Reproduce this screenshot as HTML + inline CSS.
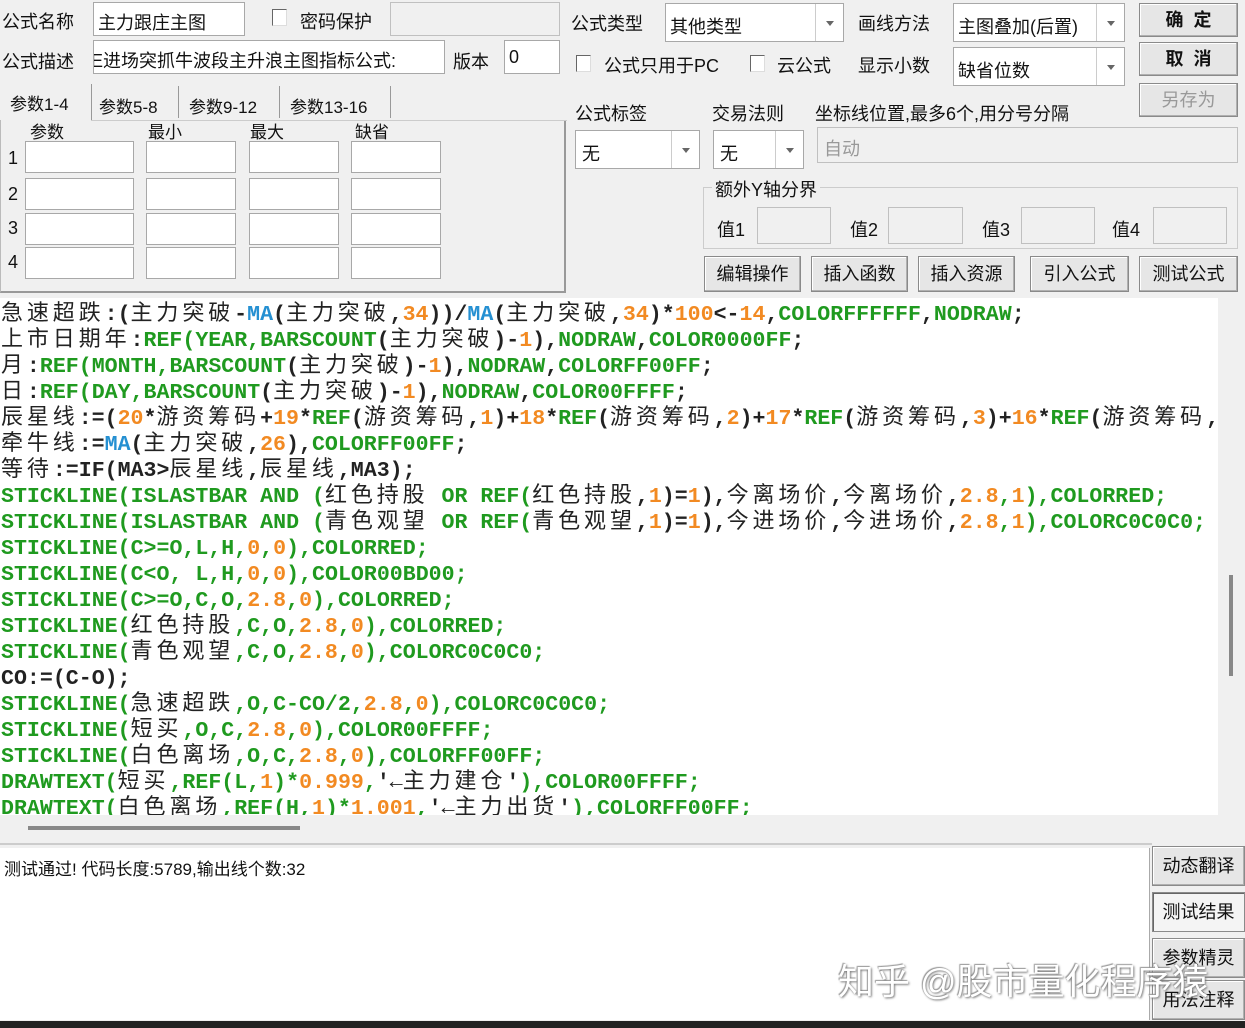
<!DOCTYPE html>
<html><head><meta charset="utf-8"><style>
*{margin:0;padding:0;box-sizing:border-box}
body{width:1245px;height:1028px;background:#f0f0f0;position:relative;overflow:hidden;font-family:"Liberation Sans","Noto Sans CJK SC",sans-serif;font-size:18px;color:#111}
.a{position:absolute;white-space:nowrap}
.in{position:absolute;background:#fff;border:1px solid #a8a8a8}
.dis{position:absolute;background:#f0f0f0;border:1px solid #c0c0c0}
.btn{position:absolute;background:#e6e6e6;border:1px solid #8a8a8a;box-shadow:inset -1px -1px 0 #b0b0b0,inset 1px 1px 0 #fff;text-align:center;font-size:18px}
.cb{position:absolute;width:15px;height:17px;background:#fff;border:1px solid #666;border-right-color:#ddd;border-bottom-color:#ddd}
.dd{position:absolute;top:0;right:0;bottom:0;width:28px;border-left:1px solid #ccc}
.dd:after{content:"";position:absolute;left:10px;top:47%;border:4px solid transparent;border-top:5px solid #666}
#code{position:absolute;left:0;top:298px;width:1218px;height:517px;background:#fff;overflow:hidden;font-family:"Liberation Mono","Noto Sans CJK SC",monospace;font-weight:bold;font-size:21.6px;color:#222}
#code div{height:26px;line-height:26px;white-space:nowrap;padding-left:1px}
#code div:before{content:"\3000";display:inline-block;width:0;font-family:"Noto Sans CJK SC",sans-serif;font-weight:normal;font-size:22px;line-height:26px}
#code i{font-style:normal;font-weight:normal;font-family:"Noto Sans CJK SC",sans-serif;letter-spacing:3.9px;font-size:22px;line-height:26px}
.g{color:#1f9a1f}.b{color:#2590d2}.o{color:#f28a22}
</style></head><body>
<div class="a" style="left:2px;top:8px">公式名称</div>
<div class="in" style="left:93px;top:2px;width:152px;height:34px"><span class="a" style="left:4px;top:6px">主力跟庄主图</span></div>
<div class="cb" style="left:272px;top:9px"></div>
<div class="a" style="left:300px;top:8px">密码保护</div>
<div class="dis" style="left:390px;top:2px;width:170px;height:34px"></div>
<div class="a" style="left:2px;top:48px">公式描述</div>
<div class="in" style="left:93px;top:40px;width:352px;height:34px;overflow:hidden"><span class="a" style="left:-3px;top:6px">E进场突抓牛波段主升浪主图指标公式:</span></div>
<div class="a" style="left:453px;top:48px">版本</div>
<div class="in" style="left:504px;top:40px;width:56px;height:34px"><span class="a" style="left:4px;top:6px">0</span></div>

<div class="a" style="left:10px;top:90px;font-size:17px">参数1-4</div>
<div class="a" style="left:91px;top:84px;width:1px;height:36px;background:#999"></div>
<div class="a" style="left:99px;top:93px;font-size:17px">参数5-8</div>
<div class="a" style="left:178px;top:86px;width:1px;height:32px;background:#999"></div>
<div class="a" style="left:189px;top:93px;font-size:17px">参数9-12</div>
<div class="a" style="left:279px;top:86px;width:1px;height:32px;background:#999"></div>
<div class="a" style="left:290px;top:93px;font-size:17px">参数13-16</div>
<div class="a" style="left:390px;top:86px;width:1px;height:32px;background:#999"></div>
<div class="a" style="left:0;top:120px;width:566px;height:173px;border:1px solid #bbb;border-right:2px solid #999;border-bottom:2px solid #999;border-top:none"></div>
<div class="a" style="left:91px;top:120px;width:476px;height:1px;background:#ccc"></div>
<div class="a" style="left:30px;top:118px;font-size:17px">参数</div>
<div class="a" style="left:148px;top:118px;font-size:17px">最小</div>
<div class="a" style="left:250px;top:118px;font-size:17px">最大</div>
<div class="a" style="left:355px;top:118px;font-size:17px">缺省</div>
<div class="a" style="left:8px;top:148px">1</div><div class="a" style="left:8px;top:184px">2</div><div class="a" style="left:8px;top:218px">3</div><div class="a" style="left:8px;top:252px">4</div>
<div class="in" style="left:25px;top:141px;width:109px;height:32px"></div><div class="in" style="left:146px;top:141px;width:90px;height:32px"></div><div class="in" style="left:249px;top:141px;width:90px;height:32px"></div><div class="in" style="left:351px;top:141px;width:90px;height:32px"></div>
<div class="in" style="left:25px;top:178px;width:109px;height:32px"></div><div class="in" style="left:146px;top:178px;width:90px;height:32px"></div><div class="in" style="left:249px;top:178px;width:90px;height:32px"></div><div class="in" style="left:351px;top:178px;width:90px;height:32px"></div>
<div class="in" style="left:25px;top:213px;width:109px;height:32px"></div><div class="in" style="left:146px;top:213px;width:90px;height:32px"></div><div class="in" style="left:249px;top:213px;width:90px;height:32px"></div><div class="in" style="left:351px;top:213px;width:90px;height:32px"></div>
<div class="in" style="left:25px;top:247px;width:109px;height:32px"></div><div class="in" style="left:146px;top:247px;width:90px;height:32px"></div><div class="in" style="left:249px;top:247px;width:90px;height:32px"></div><div class="in" style="left:351px;top:247px;width:90px;height:32px"></div>

<div class="a" style="left:571px;top:10px">公式类型</div>
<div class="in" style="left:665px;top:3px;width:179px;height:39px"><span class="a" style="left:4px;top:9px">其他类型</span><div class="dd"></div></div>
<div class="a" style="left:858px;top:10px">画线方法</div>
<div class="in" style="left:953px;top:3px;width:172px;height:39px"><span class="a" style="left:4px;top:9px">主图叠加(后置)</span><div class="dd"></div></div>
<div class="btn" style="left:1139px;top:3px;width:99px;height:34px;line-height:32px;font-weight:bold">确&nbsp;&nbsp;定</div>
<div class="cb" style="left:576px;top:55px"></div>
<div class="a" style="left:604px;top:52px">公式只用于PC</div>
<div class="cb" style="left:750px;top:55px"></div>
<div class="a" style="left:777px;top:52px">云公式</div>
<div class="a" style="left:858px;top:52px">显示小数</div>
<div class="in" style="left:953px;top:47px;width:172px;height:39px"><span class="a" style="left:4px;top:9px">缺省位数</span><div class="dd"></div></div>
<div class="btn" style="left:1139px;top:42px;width:99px;height:34px;line-height:32px;font-weight:bold">取&nbsp;&nbsp;消</div>
<div class="btn" style="left:1139px;top:83px;width:99px;height:34px;line-height:32px;color:#999">另存为</div>
<div class="a" style="left:575px;top:100px">公式标签</div>
<div class="a" style="left:712px;top:100px">交易法则</div>
<div class="a" style="left:815px;top:100px">坐标线位置,最多6个,用分号分隔</div>
<div class="in" style="left:575px;top:130px;width:125px;height:39px"><span class="a" style="left:6px;top:9px">无</span><div class="dd"></div></div>
<div class="in" style="left:713px;top:130px;width:91px;height:39px"><span class="a" style="left:6px;top:9px">无</span><div class="dd"></div></div>
<div class="dis" style="left:817px;top:127px;width:421px;height:36px"><span class="a" style="left:6px;top:7px;color:#999">自动</span></div>
<div class="a" style="left:703px;top:187px;width:535px;height:62px;border:1px solid #ccc"></div>
<div class="a" style="left:712px;top:176px;background:#f0f0f0;padding:0 3px">额外Y轴分界</div>
<div class="a" style="left:717px;top:216px">值1</div><div class="dis" style="left:757px;top:207px;width:74px;height:37px"></div>
<div class="a" style="left:850px;top:216px">值2</div><div class="dis" style="left:888px;top:207px;width:75px;height:37px"></div>
<div class="a" style="left:982px;top:216px">值3</div><div class="dis" style="left:1021px;top:207px;width:74px;height:37px"></div>
<div class="a" style="left:1112px;top:216px">值4</div><div class="dis" style="left:1153px;top:207px;width:74px;height:37px"></div>
<div class="btn" style="left:704px;top:256px;width:97px;height:36px;line-height:34px">编辑操作</div>
<div class="btn" style="left:811px;top:256px;width:97px;height:36px;line-height:34px">插入函数</div>
<div class="btn" style="left:918px;top:256px;width:97px;height:36px;line-height:34px">插入资源</div>
<div class="btn" style="left:1030px;top:256px;width:99px;height:36px;line-height:34px">引入公式</div>
<div class="btn" style="left:1139px;top:256px;width:99px;height:36px;line-height:34px">测试公式</div>

<div id="code">
<div><i>急速超跌</i>:(<i>主力突破</i>-<span class="b">MA</span>(<i>主力突破</i>,<span class="o">34</span>))/<span class="b">MA</span>(<i>主力突破</i>,<span class="o">34</span>)*<span class="o">100</span>&lt;-<span class="o">14</span>,<span class="g">COLORFFFFFF</span>,<span class="g">NODRAW</span>;</div>
<div><i>上市日期年</i>:<span class="g">REF(YEAR,BARSCOUNT</span>(<i>主力突破</i>)-<span class="o">1</span>),<span class="g">NODRAW</span>,<span class="g">COLOR0000FF</span>;</div>
<div><i>月</i>:<span class="g">REF(MONTH,BARSCOUNT</span>(<i>主力突破</i>)-<span class="o">1</span>),<span class="g">NODRAW</span>,<span class="g">COLORFF00FF</span>;</div>
<div><i>日</i>:<span class="g">REF(DAY,BARSCOUNT</span>(<i>主力突破</i>)-<span class="o">1</span>),<span class="g">NODRAW</span>,<span class="g">COLOR00FFFF</span>;</div>
<div><i>辰星线</i>:=(<span class="o">20</span>*<i>游资筹码</i>+<span class="o">19</span>*<span class="g">REF</span>(<i>游资筹码</i>,<span class="o">1</span>)+<span class="o">18</span>*<span class="g">REF</span>(<i>游资筹码</i>,<span class="o">2</span>)+<span class="o">17</span>*<span class="g">REF</span>(<i>游资筹码</i>,<span class="o">3</span>)+<span class="o">16</span>*<span class="g">REF</span>(<i>游资筹码</i>,</div>
<div><i>牵牛线</i>:=<span class="b">MA</span>(<i>主力突破</i>,<span class="o">26</span>),<span class="g">COLORFF00FF</span>;</div>
<div><i>等待</i>:=IF(MA3&gt;<i>辰星线</i>,<i>辰星线</i>,MA3);</div>
<div class="g">STICKLINE(ISLASTBAR AND (<i style="color:#222">红色持股</i> OR REF(<i style="color:#222">红色持股</i><span style="color:#222">,</span><span class="o">1</span><span style="color:#222">)=</span><span class="o">1</span><span style="color:#222">),</span><i style="color:#222">今离场价</i><span style="color:#222">,</span><i style="color:#222">今离场价</i><span style="color:#222">,</span><span class="o">2.8</span>,<span class="o">1</span>),COLORRED;</div>
<div class="g">STICKLINE(ISLASTBAR AND (<i style="color:#222">青色观望</i> OR REF(<i style="color:#222">青色观望</i><span style="color:#222">,</span><span class="o">1</span><span style="color:#222">)=</span><span class="o">1</span><span style="color:#222">),</span><i style="color:#222">今进场价</i><span style="color:#222">,</span><i style="color:#222">今进场价</i><span style="color:#222">,</span><span class="o">2.8</span>,<span class="o">1</span>),COLORC0C0C0;</div>
<div class="g">STICKLINE(C&gt;=O,L,H,<span class="o">0</span>,<span class="o">0</span>),COLORRED;</div>
<div class="g">STICKLINE(C&lt;O, L,H,<span class="o">0</span>,<span class="o">0</span>),COLOR00BD00;</div>
<div class="g">STICKLINE(C&gt;=O,C,O,<span class="o">2.8</span>,<span class="o">0</span>),COLORRED;</div>
<div class="g">STICKLINE(<i style="color:#222">红色持股</i>,C,O,<span class="o">2.8</span>,<span class="o">0</span>),COLORRED;</div>
<div class="g">STICKLINE(<i style="color:#222">青色观望</i>,C,O,<span class="o">2.8</span>,<span class="o">0</span>),COLORC0C0C0;</div>
<div>CO:=(C-O);</div>
<div class="g">STICKLINE(<i style="color:#222">急速超跌</i>,O,C-CO/2,<span class="o">2.8</span>,<span class="o">0</span>),COLORC0C0C0;</div>
<div class="g">STICKLINE(<i style="color:#222">短买</i>,O,C,<span class="o">2.8</span>,<span class="o">0</span>),COLOR00FFFF;</div>
<div class="g">STICKLINE(<i style="color:#222">白色离场</i>,O,C,<span class="o">2.8</span>,<span class="o">0</span>),COLORFF00FF;</div>
<div class="g">DRAWTEXT(<i style="color:#222">短买</i>,REF(L,<span class="o">1</span>)*<span class="o">0.999</span>,<span style="color:#222">'←</span><i style="color:#222">主力建仓</i><span style="color:#222">'</span>),COLOR00FFFF;</div>
<div class="g">DRAWTEXT(<i style="color:#222">白色离场</i>,REF(H,<span class="o">1</span>)*<span class="o">1.001</span>,<span style="color:#222">'←</span><i style="color:#222">主力出货</i><span style="color:#222">'</span>),COLORFF00FF;</div>
</div>
<div class="a" style="left:1229px;top:575px;width:4px;height:101px;background:#888"></div>
<div class="a" style="left:28px;top:826px;width:272px;height:4px;background:#888"></div>
<div class="a" style="left:0;top:843px;width:1152px;height:2px;background:#ccc"></div>

<div class="a" style="left:0;top:848px;width:1150px;height:172px;background:#fff;border-right:1px solid #aaa"></div>
<div class="a" style="left:4px;top:855px;font-size:17px">测试通过! 代码长度:5789,输出线个数:32</div>
<div class="btn" style="left:1152px;top:846px;width:93px;height:40px;line-height:38px">动态翻译</div>
<div class="btn" style="left:1152px;top:892px;width:93px;height:40px;line-height:38px;background:#f4f4f4;box-shadow:inset 1px 1px 0 #666">测试结果</div>
<div class="btn" style="left:1152px;top:938px;width:93px;height:40px;line-height:38px">参数精灵</div>
<div class="btn" style="left:1152px;top:980px;width:93px;height:40px;line-height:38px">用法注释</div>
<div class="a" style="left:838px;top:953px;font-size:36px;color:#fff;text-shadow:1px 1px 2px #777,-1px -1px 1px #999">知乎 @股市量化程序猿</div>
<div class="a" style="left:0;top:1021px;width:1245px;height:7px;background:#222"></div>
</body></html>
